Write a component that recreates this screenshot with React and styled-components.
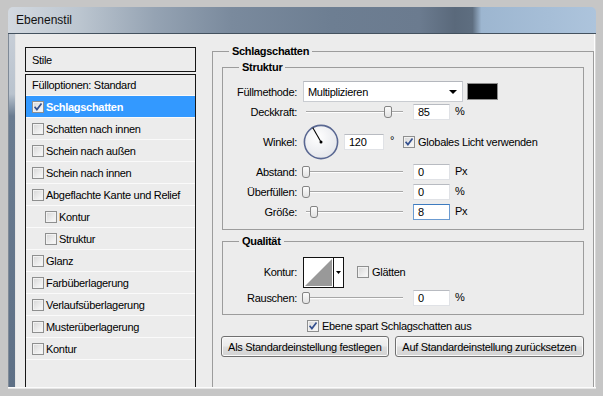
import styled, { createGlobalStyle } from "styled-components";

const GlobalStyle = createGlobalStyle`
  html, body {
    margin: 0;
    padding: 0;
  }
  body {
    width: 603px;
    height: 396px;
    overflow: hidden;
    background: #c6c6c6;
    font-family: "Liberation Sans", Arial, sans-serif;
    font-size: 11px;
    letter-spacing: -0.3px;
    color: #000;
  }
`;

const Screen = styled.div`
  width: 603px;
  height: 396px;
  box-sizing: border-box;
  padding: 7px 7px 7px 8px;
  background: #c6c6c6;
  display: flex;
`;

const Window = styled.div`
  flex: 1;
  display: flex;
  flex-direction: column;
  border-radius: 5px 5px 0 0;
  overflow: hidden;
`;

const TitleBar = styled.div`
  height: 27px;
  flex-shrink: 0;
  box-sizing: border-box;
  padding-left: 8px;
  display: flex;
  align-items: center;
  font-size: 12px;
  letter-spacing: 0;
  color: #111;
  border-bottom: 1px solid #44525f;
  background: linear-gradient(
    90deg,
    #d3d9e0 0%,
    #bcc6d0 12%,
    #95a3b3 25%,
    #7a8a9d 38%,
    #6d7e92 55%,
    #6b7b8f 70%,
    #5a697b 76%,
    #5e6e80 79%,
    #9db6d0 80.5%,
    #a6bed7 92%,
    #adc4dc 100%
  );
`;

const Middle = styled.div`
  flex: 1;
  display: flex;
  min-height: 0;
`;

const LeftFrame = styled.div`
  width: 8px;
  flex-shrink: 0;
  background: linear-gradient(
    180deg,
    #c7ced7 0px,
    #b9c3ce 60px,
    #6a7c91 82px,
    #5e7086 100%
  );
  box-shadow: inset 1px 0 0 #7f8a97, inset -1px 0 0 #e4e4e4;
`;

const RightFrame = styled.div`
  width: 2px;
  flex-shrink: 0;
  background: #d8d8d8;
  box-shadow: inset 1px 0 0 #fdfdfd;
`;

const BottomFrame = styled.div`
  height: 2px;
  flex-shrink: 0;
  background: #e6e6e6;
  box-shadow: inset 0 1px 0 #fbfbfb;
`;

const Content = styled.div`
  flex: 1;
  min-width: 0;
  background: #ececec;
  display: flex;
  gap: 16px;
  padding: 13px 0 0 9px;
  overflow: hidden;
`;

/* left styles list */

const StylesPanel = styled.div`
  width: 171px;
  flex-shrink: 0;
  display: flex;
  flex-direction: column;
`;

const PanelHeader = styled.div`
  height: 25px;
  box-sizing: border-box;
  border: 1px solid #161616;
  padding-left: 6px;
  display: flex;
  align-items: center;
`;

const StyleList = styled.div`
  flex: 1;
  margin-top: 2px;
  border: 1px solid #161616;
  border-bottom: none;
`;

const StyleRow = styled.div`
  height: ${(p) => (p.$first ? 21 : 22)}px;
  box-sizing: border-box;
  border-bottom: 1px solid #fafafa;
  display: flex;
  align-items: center;
  gap: 2px;
  padding-left: ${(p) => (p.$indent ? 19 : 6)}px;
  background: ${(p) => (p.$active ? "#3399ff" : "transparent")};
  color: ${(p) => (p.$active ? "#fff" : "#000")};
  font-weight: ${(p) => (p.$active ? "bold" : "normal")};
  white-space: nowrap;
`;

const CheckBox = styled.span`
  width: 10px;
  height: 10px;
  flex-shrink: 0;
  border: 1px solid #8e8f8f;
  background: linear-gradient(135deg, #d6d6d6 0%, #efefef 65%, #fbfbfb 100%);
  box-shadow: inset 0 0 0 1px #f2f2f2;
  display: inline-flex;
  align-items: center;
  justify-content: center;
`;

function Check({ checked }) {
  return (
    <CheckBox>
      {checked && (
        <svg width="10" height="10" viewBox="0 0 10 10">
          <path
            d="M1.6 4.8 L3.9 7.6 L8.5 1.6"
            fill="none"
            stroke="#34508f"
            strokeWidth="1.7"
          />
        </svg>
      )}
    </CheckBox>
  );
}

/* right side groups */

const OuterGroup = styled.fieldset`
  flex: 1;
  min-width: 0;
  margin: -2px 0 0;
  padding: 3px 9px 0 9px;
  border: 1px solid #9c9c9c;
  border-bottom: none;
  display: flex;
  flex-direction: column;
`;

const InnerGroup = styled.fieldset`
  min-width: 0;
  margin: ${(p) => p.$top || 0}px 0 0;
  padding: ${(p) => p.$pad};
  border: 1px solid #9c9c9c;
`;

const Legend = styled.legend`
  font-weight: bold;
  line-height: 13px;
  padding: 0 3px;
  margin-left: ${(p) => p.$offset}px;
`;

const FieldRow = styled.div`
  height: ${(p) => p.$h || 20}px;
  display: flex;
  align-items: center;
  white-space: nowrap;
`;

const Label = styled.span`
  width: 74px;
  flex-shrink: 0;
  margin-right: 6px;
  text-align: right;
`;

const Select = styled.div`
  width: 160px;
  height: 21px;
  box-sizing: border-box;
  background: #fff;
  border: 1px solid #c9ccd1;
  border-top-color: #b4b7bd;
  padding: 0 5px 0 4px;
  display: flex;
  align-items: center;
  justify-content: space-between;
`;

const Arrow = styled.span`
  width: 0;
  height: 0;
  border-left: 4px solid transparent;
  border-right: 4px solid transparent;
  border-top: 4px solid #000;
`;

const Swatch = styled.div`
  width: 31px;
  height: 17px;
  box-sizing: border-box;
  margin-left: 4px;
  background: #000;
  border: 1px solid #8c8c8c;
`;

const SliderWrap = styled.div`
  position: relative;
  width: 104px;
  height: 14px;
  flex-shrink: 0;
`;

const Track = styled.div`
  position: absolute;
  left: 3px;
  right: 4px;
  top: 6px;
  border-top: 1px solid #a7a7a7;
  border-bottom: 1px solid #fdfdfd;
`;

const Thumb = styled.div`
  position: absolute;
  top: 1px;
  width: 6px;
  height: 10px;
  margin-left: -4px;
  border: 1px solid #848484;
  border-radius: 2px 2px 3px 3px;
  background: linear-gradient(180deg, #fbfbfb 0%, #e2e2e2 100%);
`;

function Slider({ pct }) {
  return (
    <SliderWrap>
      <Track />
      <Thumb style={{ left: `calc(3px + ${pct} * 97px / 100)` }} />
    </SliderWrap>
  );
}

const Input = styled.div`
  width: ${(p) => p.$w || 37}px;
  height: 16px;
  box-sizing: border-box;
  margin-left: ${(p) => p.$ml || 6}px;
  padding-left: 4px;
  background: #fff;
  border: 1px solid ${(p) => (p.$focus ? "#6b9bd1" : "#e0e2e6")};
  border-top-color: ${(p) => (p.$focus ? "#3d7bbf" : "#b8bbc1")};
  display: flex;
  align-items: center;
  font-size: 11px;
`;

const Unit = styled.span`
  margin-left: ${(p) => p.$ml || 5}px;
  align-self: flex-start;
  margin-top: ${(p) => p.$mt || 3}px;
`;

const InlineCheck = styled.label`
  display: flex;
  align-items: center;
  gap: 3px;
  margin-left: ${(p) => p.$ml || 0}px;
`;

const CheckRow = styled.div`
  margin-top: 4px;
  height: 14px;
  padding-left: 85px;
  display: flex;
  align-items: center;
  white-space: nowrap;
`;

const ButtonRow = styled.div`
  margin: 3px 0 0 -1px;
  display: flex;
  gap: 6px;
`;

const Button = styled.div`
  width: ${(p) => p.$w}px;
  height: 21px;
  box-sizing: border-box;
  border: 1px solid #707070;
  border-radius: 3px;
  background: linear-gradient(180deg, #f3f3f3 0%, #ebebeb 48%, #dedede 52%, #d2d2d2 100%);
  box-shadow: inset 0 0 0 1px #fafafa;
  display: flex;
  align-items: center;
  justify-content: center;
  white-space: nowrap;
`;

function Dial() {
  return (
    <svg width="36" height="36" viewBox="0 0 36 36">
      <defs>
        <radialGradient id="dialFill" cx="40%" cy="35%" r="70%">
          <stop offset="0%" stopColor="#ffffff" />
          <stop offset="100%" stopColor="#e3e5ea" />
        </radialGradient>
      </defs>
      <circle cx="18" cy="18" r="16.6" fill="url(#dialFill)" stroke="#5a6892" strokeWidth="1.6" />
      <line x1="18" y1="18" x2="9.8" y2="3.8" stroke="#000" strokeWidth="1.1" />
      <circle cx="18" cy="18" r="1.5" fill="#000" />
    </svg>
  );
}

function ContourPicker() {
  return (
    <svg width="41" height="31" viewBox="0 0 41 31">
      <rect x="0.5" y="0.5" width="40" height="30" fill="#fff" stroke="#111" />
      <polygon points="2,29 29,2 29,29" fill="#999" />
      <line x1="30.5" y1="1" x2="30.5" y2="30" stroke="#111" />
      <polygon points="33,14 38,14 35.5,17" fill="#000" />
    </svg>
  );
}

const styleItems = [
  { label: "Schlagschatten", checked: true, active: true },
  { label: "Schatten nach innen" },
  { label: "Schein nach außen" },
  { label: "Schein nach innen" },
  { label: "Abgeflachte Kante und Relief" },
  { label: "Kontur", indent: true },
  { label: "Struktur", indent: true },
  { label: "Glanz" },
  { label: "Farbüberlagerung" },
  { label: "Verlaufsüberlagerung" },
  { label: "Musterüberlagerung" },
  { label: "Kontur" },
];

export default function App() {
  return (
    <>
      <GlobalStyle />
      <Screen>
        <Window>
          <TitleBar>Ebenenstil</TitleBar>
          <Middle>
            <LeftFrame />
            <Content>
              <StylesPanel>
                <PanelHeader>Stile</PanelHeader>
                <StyleList>
                  <StyleRow $first>Fülloptionen: Standard</StyleRow>
                  {styleItems.map((item, i) => (
                    <StyleRow key={i} $active={item.active} $indent={item.indent}>
                      <Check checked={item.checked} />
                      <span>{item.label}</span>
                    </StyleRow>
                  ))}
                </StyleList>
              </StylesPanel>

              <OuterGroup>
                <Legend $offset={7}>Schlagschatten</Legend>
                <InnerGroup $pad="7px 0 7px 0">
                  <Legend $offset={16}>Struktur</Legend>
                  <FieldRow $h={21}>
                    <Label>Füllmethode:</Label>
                    <Select>
                      <span>Multiplizieren</span>
                      <Arrow />
                    </Select>
                    <Swatch />
                  </FieldRow>
                  <FieldRow>
                    <Label>Deckkraft:</Label>
                    <Slider pct={85} />
                    <Input>85</Input>
                    <Unit>%</Unit>
                  </FieldRow>
                  <FieldRow $h={40}>
                    <Label>Winkel:</Label>
                    <Dial />
                    <Input $w={40} $ml={5}>120</Input>
                    <Unit $ml={6} $mt={12}>°</Unit>
                    <InlineCheck $ml={9}>
                      <Check checked />
                      <span>Globales Licht verwenden</span>
                    </InlineCheck>
                  </FieldRow>
                  <FieldRow>
                    <Label>Abstand:</Label>
                    <Slider pct={0} />
                    <Input>0</Input>
                    <Unit>Px</Unit>
                  </FieldRow>
                  <FieldRow>
                    <Label>Überfüllen:</Label>
                    <Slider pct={0} />
                    <Input>0</Input>
                    <Unit>%</Unit>
                  </FieldRow>
                  <FieldRow>
                    <Label>Größe:</Label>
                    <Slider pct={8} />
                    <Input $focus>8</Input>
                    <Unit>Px</Unit>
                  </FieldRow>
                </InnerGroup>

                <InnerGroup $top={5} $pad="8px 0 6px 0">
                  <Legend $offset={16}>Qualität</Legend>
                  <FieldRow $h={32}>
                    <Label>Kontur:</Label>
                    <ContourPicker />
                    <InlineCheck $ml={13}>
                      <Check />
                      <span>Glätten</span>
                    </InlineCheck>
                  </FieldRow>
                  <FieldRow>
                    <Label>Rauschen:</Label>
                    <Slider pct={0} />
                    <Input>0</Input>
                    <Unit>%</Unit>
                  </FieldRow>
                </InnerGroup>

                <CheckRow>
                  <InlineCheck>
                    <Check checked />
                    <span>Ebene spart Schlagschatten aus</span>
                  </InlineCheck>
                </CheckRow>

                <ButtonRow>
                  <Button $w={169}>Als Standardeinstellung festlegen</Button>
                  <Button $w={191}>Auf Standardeinstellung zurücksetzen</Button>
                </ButtonRow>
              </OuterGroup>
            </Content>
            <RightFrame />
          </Middle>
          <BottomFrame />
        </Window>
      </Screen>
    </>
  );
}
